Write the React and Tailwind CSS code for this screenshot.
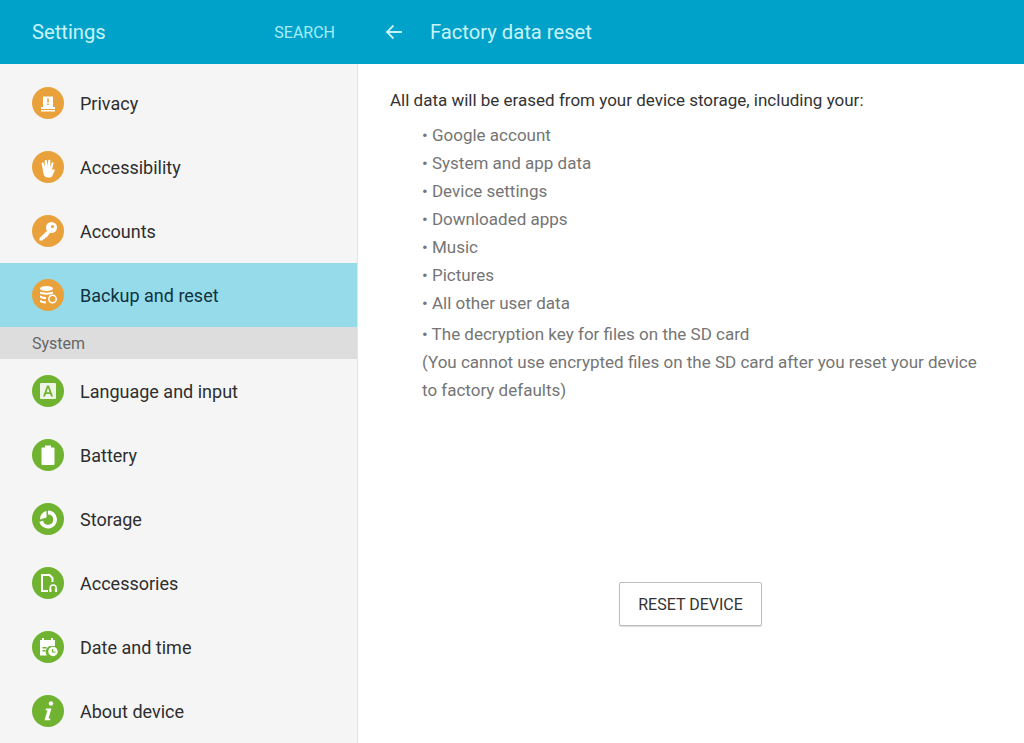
const W = "#fff";
const O = "#e9a23b";
const G = "#6fb330";

function Privacy() {
  return (
    <svg viewBox="0 0 32 32" className="w-8 h-8">
      <path d="M11 9.500h10v10.500H11z" fill={W} />
      <path d="M15.200 11.500h1.600v4h-1.600zM15.200 16.500h1.600v1.600h-1.600z" fill={O} />
      <path d="M9 20h14v2H9zM9 23h14v1.500H9z" fill={W} />
    </svg>
  );
}
function Hand() {
  return (
    <svg viewBox="0 0 32 32" className="w-8 h-8">
      <path d="M9.600 12.500c0-1.400 2-1.400 2.100 0l1.100 3.600-.1-6.100c0-1.500 2.200-1.500 2.300 0l.6 5.600.6-6c.2-1.400 2.200-1.200 2.200.2l-.3 6.200 1.500-4c.5-1.300 2.300-.7 1.900.6l-1.500 6.500 1.200-.6c1-.6 2.200.6 1.400 1.600L20 25.500c-.7.800-1.600 1-2.600 1h-1.800c-2.200 0-3.500-1.300-4-3.400L9.600 12.500z" fill={W} />
    </svg>
  );
}
function Key() {
  return (
    <svg viewBox="0 0 32 32" className="w-8 h-8">
      <circle cx="19.500" cy="12.500" r="5.500" fill={W} />
      <circle cx="20.500" cy="11.500" r="1.500" fill={O} />
      <path d="M15.500 15.500l-8 7.500v2.500h3l1-1.500h1.500v-1.500h1.500l3.500-4.500z" fill={W} />
    </svg>
  );
}
function Backup() {
  return (
    <svg viewBox="0 0 32 32" className="w-8 h-8">
      <ellipse cx="14.500" cy="9.500" rx="6.500" ry="2.500" fill={W} />
      <path d="M8 12.500c2 1.500 11 1.500 13 0v2c-2 1.500-11 1.500-13 0zM8 16.500c1.500 1 4 1.500 6 1.400v2.200c-2 .1-4.500-.4-6-1.400zM8 21c1.500 1 4 1.500 6 1.400v2c-2 .1-4.500-.4-6-1.400z" fill={W} />
      <circle cx="20.500" cy="20" r="3.700" fill="none" stroke={W} strokeWidth="1.500" />
    </svg>
  );
}
function Lang() {
  return (
    <svg viewBox="0 0 32 32" className="w-8 h-8">
      <rect x="8" y="8" width="16" height="16" rx="1" fill="#eef5e6" />
      <path d="M15 10.500h2l4 11h-2l-.9-2.600h-4.200l-.9 2.600h-2zM14.500 17.200h3L16 12.800z" fill={G} />
    </svg>
  );
}
function Battery() {
  return (
    <svg viewBox="0 0 32 32" className="w-8 h-8">
      <path d="M13 6.500h6v2h2.500a1 1 0 0 1 1 1V25a1 1 0 0 1-1 1h-11a1 1 0 0 1-1-1V9.500a1 1 0 0 1 1-1H13z" fill={W} />
    </svg>
  );
}
function Storage() {
  return (
    <svg viewBox="0 0 32 32" className="w-8 h-8">
      <path d="M16 7.500a9 9 0 1 1-8.700 11.200l3.800-.9A5.100 5.100 0 1 0 16 11.500z" fill={W} />
      <path d="M14.500 8v6.500L8 16.500C8 12 10.500 9 14.500 8z" fill={W} />
    </svg>
  );
}
function Accessory() {
  return (
    <svg viewBox="0 0 32 32" className="w-8 h-8">
      <path d="M16 24H10V8h7.500l3 3v4" fill="none" stroke={W} strokeWidth="2" />
      <path d="M18.300 23v-2a2.900 2.900 0 0 1 5.800 0v2" fill="none" stroke={W} strokeWidth="1.500" />
      <rect x="17.300" y="22" width="2.200" height="3" fill={W} />
      <rect x="22.900" y="22" width="2.200" height="3" fill={W} />
    </svg>
  );
}
function DateIcon() {
  return (
    <svg viewBox="0 0 32 32" className="w-8 h-8">
      <path d="M8 9h2V7h2v2h7V7h2v2h2v6h-5a6 6 0 0 0-3 9.500H8z" fill={W} />
      <path d="M10.500 16h4v1.500h-4zM10.500 19h3v1.500h-3z" fill={G} />
      <circle cx="21" cy="20.500" r="4.700" fill={W} />
      <path d="M20.500 18v3h3" fill="none" stroke={G} strokeWidth="1.200" />
    </svg>
  );
}
function Info() {
  return (
    <svg viewBox="0 0 32 32" className="w-8 h-8">
      <circle cx="19" cy="8.500" r="2.200" fill={W} />
      <path d="M14 13.500h5.500l-3 10h2l-.5 1.800h-5.500l3-10h-2.100z" fill={W} />
    </svg>
  );
}

function Row({ label, color, Icon, active }) {
  return (
    <div className={`h-16 flex items-center pl-8 ${active ? "bg-[#96dbe9]" : ""}`}>
      <div className={`w-8 h-8 rounded-full flex items-center justify-center shrink-0 ${color}`}>
        <Icon />
      </div>
      <span className={`ml-4 text-[18px] ${active ? "text-[#0f3240]" : "text-[#2e2e2e]"}`}>{label}</span>
    </div>
  );
}

const orange = "bg-[#e9a23b]";
const green = "bg-[#6fb330]";

const bullets = [
  "Google account",
  "System and app data",
  "Device settings",
  "Downloaded apps",
  "Music",
  "Pictures",
  "All other user data",
];

export default function App() {
  return (
    <div className="w-[1024px] h-[743px] overflow-hidden flex flex-col bg-white font-['Roboto',sans-serif]">
      <header className="h-16 shrink-0 flex bg-[#00a2c9]">
        <div className="w-[358px] shrink-0 flex items-center justify-between pl-8 pr-[23px]">
          <span className="text-[20.200px] text-[#c8f4fb] pt-[1px]">Settings</span>
          <span className="text-[16px] text-[#a5eef9] pt-[1px]">SEARCH</span>
        </div>
        <div className="flex items-center pl-[26px]">
          <svg viewBox="0 0 20 20" className="w-5 h-5" fill="none" stroke="#c0f3fb" strokeWidth="1.800">
            <path d="M18 10H3M9.500 3.500L3 10l6.500 6.500" />
          </svg>
          <span className="ml-[26px] text-[20.200px] text-[#c8f4fb] pt-[1px]">Factory data reset</span>
        </div>
      </header>
      <div className="flex-1 flex min-h-0">
        <aside className="w-[358px] shrink-0 bg-[#f5f5f6] border-r border-[#e4e4e6] pt-[7px]">
          <Row label="Privacy" color={orange} Icon={Privacy} />
          <Row label="Accessibility" color={orange} Icon={Hand} />
          <Row label="Accounts" color={orange} Icon={Key} />
          <Row label="Backup and reset" color={orange} Icon={Backup} active />
          <div className="h-8 flex items-center pl-8 pt-[1px] bg-[#dddddd] text-[16px] text-[#666666]">System</div>
          <Row label="Language and input" color={green} Icon={Lang} />
          <Row label="Battery" color={green} Icon={Battery} />
          <Row label="Storage" color={green} Icon={Storage} />
          <Row label="Accessories" color={green} Icon={Accessory} />
          <Row label="Date and time" color={green} Icon={DateIcon} />
          <Row label="About device" color={green} Icon={Info} />
        </aside>
        <main className="flex-1 pl-8 pt-6 flex flex-col">
          <p className="text-[17px] leading-6 text-[#333333]">All data will be erased from your device storage, including your:</p>
          <ul className="pl-8 mt-[9px] text-[17px] text-[#757575]">
            {bullets.map((b) => (
              <li key={b} className="h-7 leading-7">• {b}</li>
            ))}
            <li className="mt-[3px] h-7 leading-7">• The decryption key for files on the SD card</li>
            <li className="leading-7 w-[570px]">(You cannot use encrypted files on the SD card after you reset your device to factory defaults)</li>
          </ul>
          <div className="mt-[178px] w-[600px] flex justify-center pl-[1px]">
            <button className="w-[143px] h-[44px] pt-[1px] bg-white border border-[#bdbdbd] rounded-[2px] shadow-[0_1px_1px_rgba(0,0,0,0.15)] text-[16px] text-[#333333]">RESET DEVICE</button>
          </div>
        </main>
      </div>
    </div>
  );
}
